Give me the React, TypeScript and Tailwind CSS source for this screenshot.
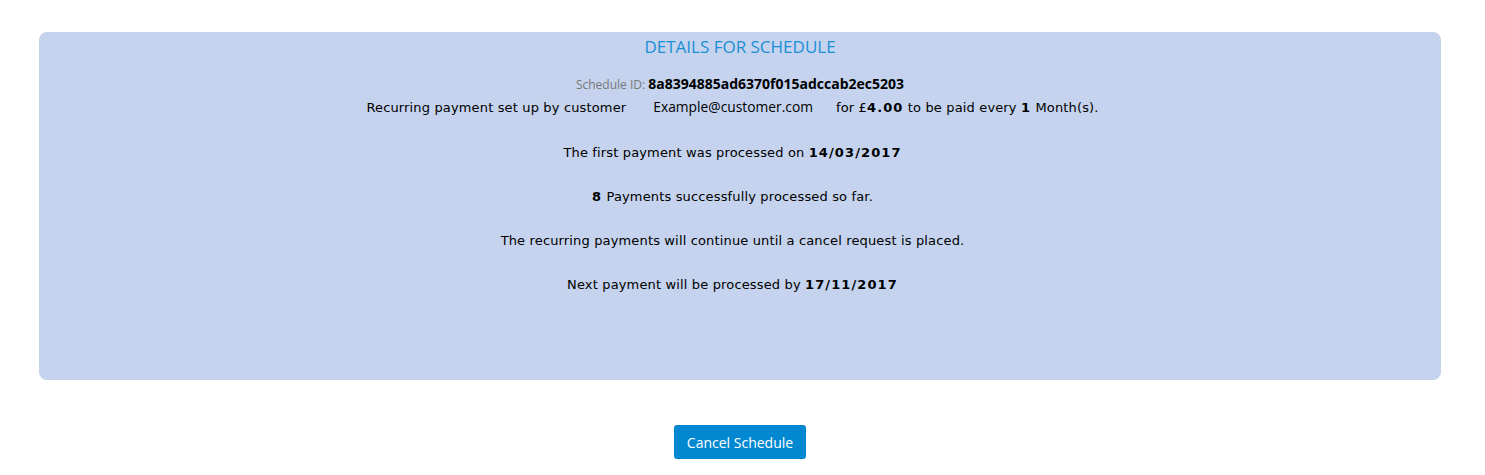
import React from "react";

const verdana = { fontFamily: '"DejaVu Sans", Verdana, sans-serif', letterSpacing: "0.15px" };

function B({ children }: { children: React.ReactNode }) {
  return <b className="tracking-[1.1px]">{children}</b>;
}

export default function App() {
  return (
    <div className="bg-white w-[1485px] h-[475px] pt-8">
      {/* schedule details panel */}
      <div className="mx-[39px] w-[1402px] h-[348px] rounded-lg bg-[#c5d3ee] text-center text-[13px] text-black font-['Open_Sans',sans-serif]">
        <h2 className="pt-[3px] text-[17px] leading-[23px] text-[#1b8fd5] font-normal">DETAILS FOR SCHEDULE</h2>
        <div className="mt-[16px] leading-[20px]">
          <span className="text-[12px] text-[#777]">Schedule ID: </span>
          <span className="text-[14px] font-bold">8a8394885ad6370f015adccab2ec5203</span>
        </div>
        <div className="pr-[15px]" style={verdana}>
          <p className="mt-[2px] leading-[20px]">
            Recurring payment set up by customer
            <span className="inline-block ml-[27px] mr-[23px] font-['Open_Sans',sans-serif] text-[13.8px] tracking-normal">Example@customer.com</span>
            for £<B>4.00</B> to be paid every <B>1</B> Month(s).
          </p>
          <p className="mt-[25px] leading-[20px]">
            The first payment was processed on <B>14/03/2017</B>
          </p>
          <p className="mt-[24px] leading-[20px]">
            <B>8</B> Payments successfully processed so far.
          </p>
          <p className="mt-[24px] leading-[20px]">
            The recurring payments will continue until a cancel request is placed.
          </p>
          <p className="mt-[24px] leading-[20px]">
            Next payment will be processed by <B>17/11/2017</B>
          </p>
        </div>
      </div>
      <div className="flex justify-center mt-[45px] pr-[5px]">
        <button className="h-[34px] px-[13px] rounded-[3px] bg-[#0288d1] text-white text-[14px] font-['Open_Sans',sans-serif]">
          Cancel Schedule
        </button>
      </div>
    </div>
  );
}
